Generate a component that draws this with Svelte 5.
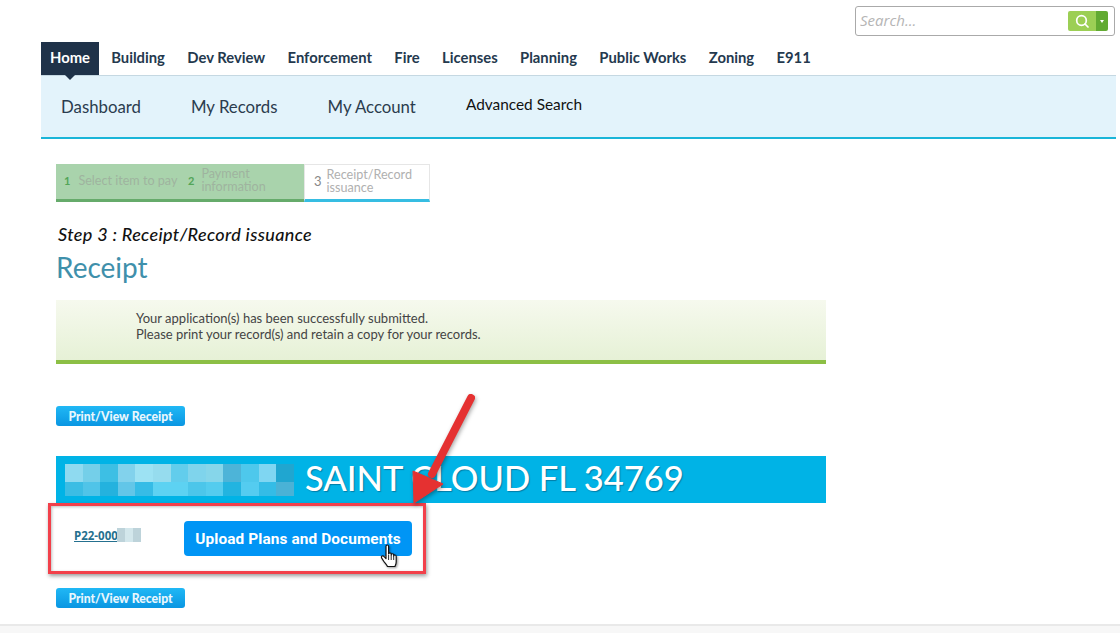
<script>
  const tabs = ['Home', 'Building', 'Dev Review', 'Enforcement', 'Fire', 'Licenses', 'Planning', 'Public Works', 'Zoning', 'E911'];

  const blurTop = ['#8fdaf0', '#74cfe9', '#3dbfe4', '#82d2ec', '#9de2f3', '#96dcee', '#62cdec', '#7fd4ec', '#86d6ea', '#4db4d8', '#4ec8ec', '#7fd6f2', '#20a6d0'];
  const blurBottom = ['#3cbde4', '#50c4e8', '#24b2de', '#62c6e8', '#36bce6', '#5dd2f2', '#5dd2f2', '#4cc6ea', '#54ccee', '#22b4e0', '#54ccf0', '#34bce6', '#4ab2d6'];
</script>

<div class="page">
  <div class="top-bar">
    <div class="search">
      <input type="text" placeholder="Search..." />
      <div class="search-btn">
        <span class="search-go">
          <svg width="14" height="14" viewBox="0 0 14 14" fill="none" stroke="#fff" stroke-width="1.7">
            <circle cx="6.5" cy="6.5" r="4.8" />
            <path d="M10 10l3 3" stroke-linecap="round" />
          </svg>
        </span>
        <span class="search-drop"></span>
      </div>
    </div>
  </div>

  <nav class="tabs">
    {#each tabs as tab, i}
      <a class="tab" class:active={i === 0} href="#top">{tab}</a>
    {/each}
  </nav>

  <div class="subnav">
    <a href="#top">Dashboard</a>
    <a href="#top">My Records</a>
    <a href="#top">My Account</a>
    <a href="#top" class="advanced">Advanced Search</a>
  </div>

  <main class="content">
    <div class="steps">
      <div class="step done first"><b>1</b><span>Select item to pay</span></div>
      <div class="step done second"><b>2</b><span>Payment<br />information</span></div>
      <div class="step current"><b>3</b><span>Receipt/Record<br />issuance</span></div>
    </div>

    <p class="step-title">Step 3 : Receipt/Record issuance</p>
    <h1>Receipt</h1>

    <div class="notice">
      Your application(s) has been successfully submitted.<br />
      Please print your record(s) and retain a copy for your records.
    </div>

    <button class="print first-print">Print/View Receipt</button>

    <div class="banner">
      <div class="blur">
        {#each blurTop as c}<i style="background:{c}"></i>{/each}
        {#each blurBottom as c}<i style="background:{c}"></i>{/each}
      </div>
      <span>SAINT CLOUD FL 34769</span>
    </div>

    <div class="record-row">
      <span class="record-id"><a href="#top">P22-000</a><span class="id-blur"><i></i><i></i><i></i></span></span>
      <button class="upload">Upload Plans and Documents</button>
    </div>

    <button class="print">Print/View Receipt</button>
  </main>

  <div class="footer"></div>

  <!-- annotation drawn on top of the screenshot -->
  <div class="callout"></div>
  <svg class="arrow" width="90" height="125" viewBox="0 0 90 125">
    <path d="M59 6L20 82" stroke="#e53131" stroke-width="8" stroke-linecap="round" fill="none" />
    <path d="M2 111L1 79L31 92Z" fill="#e53131" stroke="#e53131" stroke-width="1" />
  </svg>
  <svg class="hand" width="20" height="26" viewBox="0 0 20 26">
    <path d="M6 2.2c0-1.600 2.600-1.600 2.600 0V10c.2-1.700 2.600-1.500 2.600 0v.8c.2-1.500 2.500-1.400 2.500.2v.9c.3-1.400 2.500-1.200 2.500.5v5.600c0 2-.6 3-1.300 4.500H7.500C6.800 20.500 5 19.200 3.400 16.700L1.600 13.900c-.9-1.500 1.100-2.900 2.300-1.500L6 14.500Z" fill="#fff" stroke="#111" stroke-width="1.200" stroke-linejoin="round" />
    <path d="M8.600 11v5M11.200 11v5M13.700 12v4" stroke="#111" stroke-width=".9" fill="none" />
  </svg>
</div>

<style>
  :global(body) {
    margin: 0;
    background: #fff;
  }

  .page {
    position: relative;
    height: 633px;
    overflow: hidden;
    font-family: Lato, 'Open Sans', sans-serif;
    color: #222;
  }

  .top-bar {
    height: 42px;
    display: flex;
    justify-content: flex-end;
    padding: 6px 5px 0 0;
    box-sizing: border-box;
  }

  .search {
    width: 260px;
    height: 30px;
    box-sizing: border-box;
    border: 1px solid #aaa;
    border-radius: 3px;
    display: flex;
    align-items: center;
    justify-content: space-between;
    padding: 0 6px 0 4px;
  }

  .search input {
    border: none;
    outline: none;
    width: 180px;
    padding: 0 0 2px;
    font: italic 15px 'Open Sans', sans-serif;
  }

  .search input::placeholder {
    color: #b5b5b5;
  }

  .search-btn {
    display: flex;
    height: 20px;
    border-radius: 2px;
    overflow: hidden;
  }

  .search-go {
    width: 28px;
    background: #9ccf55;
    display: flex;
    align-items: center;
    justify-content: center;
  }

  .search-drop {
    width: 12px;
    background: #62aa32;
    position: relative;
  }

  .search-drop::after {
    content: '';
    position: absolute;
    left: 4px;
    top: 9px;
    border: 2px solid transparent;
    border-top: 3px solid #fff;
  }

  .tabs {
    margin-left: 41px;
    height: 33px;
    display: flex;
    gap: 4px;
  }

  .tab {
    padding: 0 9.200px;
    line-height: 31px;
    font-size: 14.800px;
    font-weight: 700;
    color: #24394e;
    text-decoration: none;
  }

  .tab.active {
    padding: 0;
    width: 58px;
    text-align: center;
    background: #1f3249;
    color: #fff;
    position: relative;
    margin-right: -1px;
  }

  .tab.active::after {
    content: '';
    position: absolute;
    left: 24px;
    top: 33px;
    border: 5px solid transparent;
    border-top: 5px solid #1f3249;
    border-bottom: none;
  }

  .subnav {
    margin: 0 4px 0 41px;
    height: 64px;
    box-sizing: border-box;
    background: #e3f3fb;
    border-top: 1px solid #c5d8e2;
    border-bottom: 2px solid #1ab5d8;
    display: flex;
    align-items: center;
    padding-left: 20px;
    gap: 50px;
    font-size: 16.800px;
  }

  .subnav a {
    color: #2b3c4e;
    text-decoration: none;
  }

  .subnav .advanced {
    color: #111;
    font-size: 15.400px;
    margin-bottom: 6px;
  }

  .content {
    padding: 25px 0 0 56px;
  }

  .steps {
    display: flex;
    width: 374px;
    height: 38px;
  }

  .step {
    box-sizing: border-box;
    display: flex;
    align-items: center;
    font-size: 12.600px;
    line-height: 13px;
    color: #b0b0b0;
    padding-bottom: 3px;
  }

  .step b {
    font-weight: 400;
  }

  .step.done {
    background: #a9d3ac;
    border-bottom: 3px solid #66ab6b;
    color: #9fb39f;
  }

  .step.done b {
    color: #53a558;
    font-size: 11px;
    font-weight: 700;
  }

  .step.first {
    width: 126px;
    padding-left: 8px;
    gap: 8px;
  }

  .step.first span {
    white-space: nowrap;
  }

  .step.second {
    width: 122px;
    padding-left: 6px;
    gap: 7px;
  }

  .step.current {
    width: 126px;
    padding-left: 9px;
    gap: 5px;
    border: 1px solid #e6e6e6;
    border-bottom: 3px solid #36bde2;
    padding-bottom: 2px;
  }

  .step.current b {
    font-size: 13px;
    color: #888;
  }

  .step-title {
    margin: 22px 0 0 2px;
    font-size: 18px;
    line-height: 20px;
    font-style: italic;
    font-weight: 500;
    letter-spacing: 0.350px;
    color: #111;
  }

  h1 {
    margin: 7px 0 0;
    font-size: 28px;
    line-height: 32px;
    font-weight: 400;
    color: #3f90ab;
  }

  .notice {
    margin-top: 17px;
    width: 770px;
    height: 64px;
    box-sizing: border-box;
    padding: 10px 0 0 80px;
    background: linear-gradient(#f6f9ee, #e6f1d6);
    border-bottom: 4px solid #8cbf45;
    font-size: 13px;
    line-height: 16px;
    color: #444;
  }

  .print {
    display: block;
    width: 129px;
    height: 20px;
    padding: 0;
    border: none;
    border-radius: 3px;
    background: linear-gradient(#20b8f5, #0a96e2);
    color: #e9f7fd;
    font: 900 12.200px Lato, sans-serif;
  }

  .first-print {
    margin-top: 42px;
  }

  .banner {
    margin-top: 30px;
    width: 770px;
    height: 47px;
    background: #00b3e6;
    display: flex;
    align-items: center;
    padding-left: 9px;
    box-sizing: border-box;
    gap: 11px;
  }

  .banner span {
    color: #fff;
    font-size: 34.500px;
    font-weight: 500;
    margin-bottom: 5px;
    text-shadow: 1px 1px 1px rgba(0, 60, 90, 0.45);
    white-space: nowrap;
  }

  .blur {
    display: grid;
    grid-template-columns: repeat(13, 17.620px);
    grid-template-rows: 18px 14px;
  }

  .record-row {
    height: 85px;
    position: relative;
    display: flex;
    align-items: flex-start;
    padding: 18px 0 0 18px;
    box-sizing: border-box;
  }

  .record-id {
    display: flex;
    align-items: center;
    width: 110px;
    height: 24px;
    margin-top: 2px;
    font: 700 11.500px 'Open Sans', sans-serif;
  }

  .record-id a {
    color: #25708f;
  }

  .id-blur {
    display: flex;
    margin-left: -1px;
  }

  .id-blur i {
    width: 8px;
    height: 14px;
    background: #bdd3da;
  }

  .id-blur i:nth-child(2) {
    background: #d3e7ec;
  }

  .upload {
    width: 228px;
    height: 35px;
    padding: 0;
    border: none;
    border-radius: 4px;
    background: #0095f5;
    color: #fff;
    font: 700 15.400px Roboto, 'Liberation Sans', sans-serif;
    letter-spacing: 0.100px;
  }

  .footer {
    position: absolute;
    left: 0;
    right: 0;
    top: 624px;
    bottom: 0;
    background: #f7f7f7;
    border-top: 2px solid #e9e9e9;
  }

  .callout {
    position: absolute;
    left: 48px;
    top: 503px;
    width: 378px;
    height: 71px;
    box-sizing: border-box;
    border: 3px solid #f2404a;
    box-shadow: 1px 2px 4px rgba(0, 0, 0, 0.4), inset 1px 1px 3px rgba(0, 0, 0, 0.25);
  }

  .arrow {
    position: absolute;
    left: 412px;
    top: 392px;
    filter: drop-shadow(1px 2px 2px rgba(0, 0, 0, 0.35));
  }

  .hand {
    position: absolute;
    left: 380px;
    top: 544px;
    filter: drop-shadow(1px 1px 1px rgba(0, 0, 0, 0.4));
  }
</style>
